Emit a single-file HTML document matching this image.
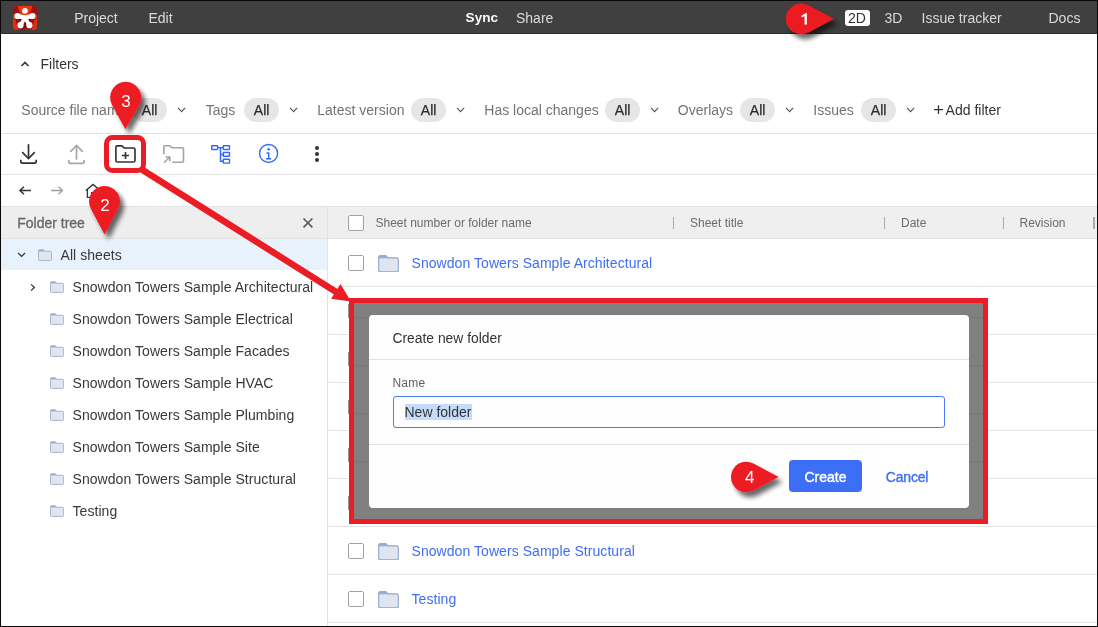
<!DOCTYPE html>
<html><head><meta charset="utf-8">
<style>
*{box-sizing:border-box;margin:0;padding:0}
html,body{width:1098px;height:627px;overflow:hidden;background:#fff;font-family:"Liberation Sans",sans-serif;color:#333}
.a{position:absolute;white-space:nowrap;will-change:opacity;opacity:0.999}
.chipt{will-change:opacity;opacity:0.999}
.f14{font-size:14px;line-height:14px}
.f12{font-size:12px;line-height:12px}
.top{color:#dcdcdc}
.lbl{color:#737373}
.chip{position:absolute;top:98px;width:35px;height:24px;border-radius:12px;background:#e6e6e6}
.chipt{position:absolute;top:103px;font-size:14px;line-height:14px;color:#2b2b2b;font-weight:normal;-webkit-text-stroke:0.25px #2b2b2b}
.hl{position:absolute;height:1px;background:#e3e3e3}
.cb{position:absolute;width:16px;height:16px;border:1.4px solid #a2a2a2;border-radius:2px;background:#fff}
.tr{color:#383838;letter-spacing:0.06px}
.lnk{color:#3f6ff2;letter-spacing:0.06px}
</style></head><body><div style="position:absolute;left:0;top:0;width:1098px;height:627px;opacity:0.999;will-change:opacity">

<!-- top bar -->
<div class="a" style="left:0;top:0;width:1098px;height:34px;background:#404040"></div>
<div class="a" style="left:0;top:33px;width:1098px;height:1px;background:#2a2a2a"></div>
<svg class="a" style="left:13px;top:6px" width="24" height="24" viewBox="0 0 24 24">
  <defs><clipPath id="lc"><rect x="0" y="0" width="24" height="24" rx="3.5"/></clipPath></defs>
  <g clip-path="url(#lc)">
    <rect width="24" height="24" fill="#ea2a0c"/>
    <polygon points="0,0 4.8,0 12,21 19.2,0 24,0 24,7 18.4,24 5.6,24 0,7" fill="#9c1210"/>
    <polygon points="4.8,0 19.2,0 12,21" fill="#f0340a"/>
    <polygon points="6,12 12,14 18,12 16,22 8,22" fill="#7e0b0a"/>
    <g fill="#fff" stroke="#fff" stroke-linecap="round">
      <circle cx="11.9" cy="4.8" r="2.9" stroke="none"/>
      <circle cx="4.4" cy="10" r="3.1" stroke="none"/>
      <circle cx="19.5" cy="10" r="3.1" stroke="none"/>
      <circle cx="7.5" cy="19.2" r="3.1" stroke="none"/>
      <circle cx="16.4" cy="19.2" r="3.1" stroke="none"/>
      <path d="M12 11.6 L4.4 10 M12 11.6 L19.5 10" stroke-width="4.4"/>
      <path d="M12 11.6 L7.5 19.2 M12 11.6 L16.4 19.2" stroke-width="3.8"/>
    </g>
  </g>
</svg>
<div class="a f14 top" style="left:74.2px;top:11px">Project</div>
<div class="a f14 top" style="left:148.5px;top:11px">Edit</div>
<div class="a" style="left:465.6px;top:11.2px;font-size:13.6px;line-height:14px;color:#fff;font-weight:bold">Sync</div>
<div class="a f14 top" style="left:516px;top:11px">Share</div>
<div class="a" style="left:845px;top:10px;width:25px;height:16px;border-radius:3px;background:#fff"></div>
<div class="a f14" style="left:848px;top:11px;color:#333">2D</div>
<div class="a f14 top" style="left:884.5px;top:11px">3D</div>
<div class="a f14 top" style="left:921.5px;top:11px">Issue tracker</div>
<div class="a f14 top" style="left:1048.5px;top:11px">Docs</div>

<!-- filters -->
<svg class="a" style="left:20px;top:60px" width="10" height="8" viewBox="0 0 10 8"><path d="M1.5 6 L5 2.5 L8.5 6" fill="none" stroke="#333" stroke-width="1.6"/></svg>
<div class="a f14" style="left:40.5px;top:57px;color:#333">Filters</div>

<div class="a f14 lbl" style="left:21.3px;top:103px">Source file name</div>
<div class="a f14 lbl" style="left:205.8px;top:103px">Tags</div>
<div class="a f14 lbl" style="left:317.3px;top:103px">Latest version</div>
<div class="a f14 lbl" style="left:484.3px;top:103px">Has local changes</div>
<div class="a f14 lbl" style="left:677.8px;top:103px">Overlays</div>
<div class="a f14 lbl" style="left:813.3px;top:103px">Issues</div>
<svg class="a" style="left:933px;top:104px" width="11" height="11" viewBox="0 0 11 11"><path d="M5.5 1.2 V10 M1 5.6 H10" stroke="#333" stroke-width="1.25" fill="none"/></svg>
<div class="a f14" style="left:945.6px;top:103px;color:#333">Add filter</div>

<div class="chip" style="left:132px"></div><div class="chipt" style="left:141.8px">All</div>
<div class="chip" style="left:244px"></div><div class="chipt" style="left:253.8px">All</div>
<div class="chip" style="left:411px"></div><div class="chipt" style="left:420.8px">All</div>
<div class="chip" style="left:605px"></div><div class="chipt" style="left:614.8px">All</div>
<div class="chip" style="left:740px"></div><div class="chipt" style="left:749.8px">All</div>
<div class="chip" style="left:861px"></div><div class="chipt" style="left:870.8px">All</div>

<svg class="a" style="left:0;top:0;pointer-events:none" width="1098" height="130">
  <g fill="none" stroke="#555" stroke-width="1.1">
    <path d="M178 107.8 L181.6 111.6 L185.2 107.8"/>
    <path d="M290 107.8 L293.6 111.6 L297.2 107.8"/>
    <path d="M457 107.8 L460.6 111.6 L464.2 107.8"/>
    <path d="M651 107.8 L654.6 111.6 L658.2 107.8"/>
    <path d="M786 107.8 L789.6 111.6 L793.2 107.8"/>
    <path d="M907 107.8 L910.6 111.6 L914.2 107.8"/>
  </g>
</svg>

<div class="hl" style="left:0;top:133px;width:1098px"></div>

<!-- toolbar icons -->
<svg class="a" style="left:0;top:135px" width="340" height="38" viewBox="0 135 340 38">
  <!-- download -->
  <g fill="none" stroke="#333" stroke-width="1.7">
    <path d="M28.5 144.2 V158"/>
    <path d="M22.2 152.2 L28.5 158.5 L34.8 152.2"/>
    <path d="M20.8 159.8 V161.8 a1.3 1.3 0 0 0 1.3 1.3 H34.9 a1.3 1.3 0 0 0 1.3 -1.3 V159.8"/>
  </g>
  <!-- upload -->
  <g fill="none" stroke="#a6a6a6" stroke-width="1.7">
    <path d="M76.5 145.8 V159.6"/>
    <path d="M70.2 151.8 L76.5 145.5 L82.8 151.8"/>
    <path d="M68.8 160 V162 a1.3 1.3 0 0 0 1.3 1.3 H82.9 a1.3 1.3 0 0 0 1.3 -1.3 V160"/>
  </g>
  <!-- create folder -->
  <g fill="none" stroke="#333" stroke-width="1.65">
    <path d="M115.9 147.2 a1.4 1.4 0 0 1 1.4 -1.4 h4.6 l2.2 2.2 h9.3 a1.6 1.6 0 0 1 1.6 1.6 v10.8 a1.6 1.6 0 0 1 -1.6 1.6 h-15.9 a1.6 1.6 0 0 1 -1.6 -1.6 z"/>
    <path d="M125.5 152 v7 M122 155.5 h7"/>
  </g>
  <!-- move folder -->
  <g fill="none" stroke="#a3a3a3" stroke-width="1.6">
    <path d="M163.8 154.2 v-7.2 a1.2 1.2 0 0 1 1.2 -1.2 h4.8 l2 2 h10.2 a1.5 1.5 0 0 1 1.5 1.5 v11.5 a1.5 1.5 0 0 1 -1.5 1.5 h-9.6"/>
    <path d="M164 162.8 l5.8 -5.8 M165.5 157 h4.3 v4.3"/>
  </g>
  <!-- tree -->
  <g fill="none" stroke="#356cf6" stroke-width="1.45">
    <rect x="211.7" y="145.7" width="6" height="3.8" rx="0.4"/>
    <rect x="223.3" y="145.7" width="6.2" height="3.8" rx="0.4"/>
    <rect x="223.3" y="152.5" width="6.2" height="3.8" rx="0.4"/>
    <rect x="223.3" y="159.3" width="6.2" height="3.8" rx="0.4"/>
    <path d="M217.7 147.6 h5.6 M220.5 147.6 v13.6 h2.8 M220.5 154.4 h2.8"/>
  </g>
  <!-- info -->
  <g fill="none" stroke="#356cf6" stroke-width="1.45">
    <circle cx="268.6" cy="153.4" r="9"/>
    <path d="M266.5 153 h2.2 v5.8 M265.9 158.8 h5.3"/>
  </g>
  <circle cx="268.6" cy="149.3" r="1.3" fill="#356cf6"/>
  <!-- more -->
  <g fill="#333">
    <circle cx="317" cy="148" r="2"/>
    <circle cx="317" cy="154" r="2"/>
    <circle cx="317" cy="160" r="2"/>
  </g>
</svg>

<div class="hl" style="left:0;top:174px;width:1098px"></div>

<!-- nav -->
<svg class="a" style="left:0;top:178px" width="110" height="24" viewBox="0 178 110 24">
  <g fill="none" stroke="#333" stroke-width="1.5">
    <path d="M31 190.5 H20 M24 186.8 L20 190.5 L24 194.2"/>
  </g>
  <g fill="none" stroke="#9e9e9e" stroke-width="1.3">
    <path d="M51 190.5 H62.5 M58.5 186.8 L62.5 190.5 L58.5 194.2"/>
  </g>
  <g fill="none" stroke="#333" stroke-width="1.3">
    <path d="M85.9 190.6 L93 184.4 L100.1 190.6 M87.4 189.4 V197.3 H98.6 V189.4 M91.6 197.3 V192.6 H94.4 V197.3"/>
  </g>
</svg>

<!-- folder tree panel -->
<div class="a" style="left:0;top:206px;width:328px;height:32px;background:#eeeeee"></div>
<div class="a f14" style="left:17.2px;top:216px;color:#666;-webkit-text-stroke:0.3px #666">Folder tree</div>
<svg class="a" style="left:300px;top:215px" width="16" height="16" viewBox="0 0 16 16"><path d="M3.5 3.5 L12.4 12.4 M12.4 3.5 L3.5 12.4" stroke="#555" stroke-width="1.5" fill="none"/></svg>
<div class="a" style="left:327px;top:206px;width:1px;height:421px;background:#e3e3e3"></div>

<div class="a" style="left:0;top:239px;width:327px;height:31px;background:#e8f2fd"></div>

<svg width="0" height="0" style="position:absolute">
  <defs>
    <symbol id="fold" viewBox="0 0 21 17">
      <path d="M0.7 2.2 a1.6 1.6 0 0 1 1.6 -1.6 h5.5 l2.3 2.3 h8.6 a1.6 1.6 0 0 1 1.6 1.6 v10.6 a1.6 1.6 0 0 1 -1.6 1.6 h-16.4 a1.6 1.6 0 0 1 -1.6 -1.6 z" fill="#dfe6f0" stroke="#8ea5c8" stroke-width="1.1"/>
      <path d="M0.7 4.3 v-2.1 a1.6 1.6 0 0 1 1.6 -1.6 h5.5 l2.6 2.6 h-9.7 z" fill="#98add0"/>
    </symbol>
  </defs>
</svg>

<svg class="a" style="left:16px;top:250px" width="12" height="10" viewBox="0 0 12 10"><path d="M2.2 3 L5.6 6.4 L9 3" fill="none" stroke="#333" stroke-width="1.25"/></svg>
<svg class="a" style="left:38px;top:249px" width="14" height="12"><use href="#fold"/></svg>
<div class="a f14 tr" style="left:60.5px;top:248px">All sheets</div>

<svg class="a" style="left:28px;top:282px" width="10" height="12" viewBox="0 0 10 12"><path d="M3.1 2.4 L6.4 5.5 L3.1 8.6" fill="none" stroke="#333" stroke-width="1.25"/></svg>

<svg class="a" style="left:50px;top:281px" width="14" height="12"><use href="#fold"/></svg>
<svg class="a" style="left:50px;top:313px" width="14" height="12"><use href="#fold"/></svg>
<svg class="a" style="left:50px;top:345px" width="14" height="12"><use href="#fold"/></svg>
<svg class="a" style="left:50px;top:377px" width="14" height="12"><use href="#fold"/></svg>
<svg class="a" style="left:50px;top:409px" width="14" height="12"><use href="#fold"/></svg>
<svg class="a" style="left:50px;top:441px" width="14" height="12"><use href="#fold"/></svg>
<svg class="a" style="left:50px;top:473px" width="14" height="12"><use href="#fold"/></svg>
<svg class="a" style="left:50px;top:505px" width="14" height="12"><use href="#fold"/></svg>

<div class="a f14 tr" style="left:72.5px;top:280px">Snowdon Towers Sample Architectural</div>
<div class="a f14 tr" style="left:72.5px;top:312px">Snowdon Towers Sample Electrical</div>
<div class="a f14 tr" style="left:72.5px;top:344px">Snowdon Towers Sample Facades</div>
<div class="a f14 tr" style="left:72.5px;top:376px">Snowdon Towers Sample HVAC</div>
<div class="a f14 tr" style="left:72.5px;top:408px">Snowdon Towers Sample Plumbing</div>
<div class="a f14 tr" style="left:72.5px;top:440px">Snowdon Towers Sample Site</div>
<div class="a f14 tr" style="left:72.5px;top:472px">Snowdon Towers Sample Structural</div>
<div class="a f14 tr" style="left:72.5px;top:504px">Testing</div>

<!-- table -->
<div class="a" style="left:328px;top:206px;width:770px;height:32px;background:#efefef"></div>
<div class="cb" style="left:348px;top:215px"></div>
<div class="a f12" style="left:375.5px;top:217px;color:#6b6b6b">Sheet number or folder name</div>
<div class="a f12" style="left:690px;top:217px;color:#6b6b6b">Sheet title</div>
<div class="a f12" style="left:901px;top:217px;color:#6b6b6b">Date</div>
<div class="a f12" style="left:1019.5px;top:217px;color:#6b6b6b">Revision</div>
<div class="a" style="left:673px;top:217px;width:1px;height:12px;background:#a8a8a8"></div>
<div class="a" style="left:884px;top:217px;width:1px;height:12px;background:#a8a8a8"></div>
<div class="a" style="left:1003px;top:217px;width:1px;height:12px;background:#a8a8a8"></div>
<div class="a" style="left:1093px;top:217px;width:1.5px;height:12px;background:#a8a8a8"></div>

<div class="hl" style="left:328px;top:286px;width:770px"></div>
<div class="hl" style="left:328px;top:334px;width:770px"></div>
<div class="hl" style="left:328px;top:382px;width:770px"></div>
<div class="hl" style="left:328px;top:430px;width:770px"></div>
<div class="hl" style="left:328px;top:478px;width:770px"></div>
<div class="hl" style="left:328px;top:526px;width:770px"></div>
<div class="hl" style="left:328px;top:574px;width:770px"></div>
<div class="hl" style="left:328px;top:622px;width:770px"></div>

<div class="cb" style="left:348px;top:255px"></div>
<svg class="a" style="left:378px;top:255px" width="21" height="17"><use href="#fold"/></svg>
<div class="a f14 lnk" style="left:411.5px;top:256px">Snowdon Towers Sample Architectural</div>

<div class="cb" style="left:348px;top:543px"></div>
<svg class="a" style="left:378px;top:543px" width="21" height="17"><use href="#fold"/></svg>
<div class="a f14 lnk" style="left:411.5px;top:544px">Snowdon Towers Sample Structural</div>

<div class="cb" style="left:348px;top:591px"></div>
<svg class="a" style="left:378px;top:591px" width="21" height="17"><use href="#fold"/></svg>
<div class="a f14 lnk" style="left:411.5px;top:592px">Testing</div>

<div class="a" style="left:0;top:206px;width:1098px;height:1px;background:#e2e2e2"></div>
<div class="a" style="left:0;top:238px;width:1098px;height:1px;background:#e2e2e2"></div>
<!-- overlay + dialog -->
<div class="a" style="left:348px;top:304px;width:1px;height:14px;background:#8e939c"></div>
<div class="a" style="left:348px;top:352px;width:1px;height:14px;background:#8e939c"></div>
<div class="a" style="left:348px;top:400px;width:1px;height:14px;background:#8e939c"></div>
<div class="a" style="left:348px;top:448px;width:1px;height:14px;background:#8e939c"></div>
<div class="a" style="left:348px;top:496px;width:1px;height:14px;background:#8e939c"></div>
<div class="a" style="left:354px;top:303px;width:629px;height:216px;background:#808080"></div>
<div class="a" style="left:354px;top:317px;width:629px;height:1px;background:#777"></div>
<div class="a" style="left:354px;top:365px;width:629px;height:1px;background:#777"></div>
<div class="a" style="left:354px;top:413px;width:629px;height:1px;background:#777"></div>
<div class="a" style="left:354px;top:461px;width:629px;height:1px;background:#777"></div>
<div class="a" style="left:369px;top:315px;width:600px;height:193px;background:#fff;border-radius:4px"></div>
<div class="a" style="left:392.5px;top:331.3px;font-size:13.85px;line-height:14px;color:#333">Create new folder</div>
<div class="hl" style="left:369px;top:359px;width:600px"></div>
<div class="a f12" style="left:392.5px;top:377px;color:#616161;letter-spacing:0.2px">Name</div>
<div class="a" style="left:393px;top:396px;width:552px;height:32px;border:1px solid #4a7bf4;border-radius:3px"></div>
<div class="a" style="left:405px;top:404px;width:67px;height:16px;background:#c5dbfb"></div>
<div class="a f14" style="left:404.5px;top:405px;color:#333">New folder</div>
<div class="hl" style="left:369px;top:444px;width:600px"></div>
<div class="a" style="left:789px;top:460px;width:73px;height:32px;border-radius:4px;background:#3d6ff6"></div>
<div class="a f14" style="left:804.5px;top:470px;color:#fff;-webkit-text-stroke:0.4px #fff">Create</div>
<div class="a f14" style="left:885.8px;top:470px;color:#3f6ff2;-webkit-text-stroke:0.4px #3f6ff2;letter-spacing:-0.2px">Cancel</div>

<!-- annotations -->
<svg class="a" style="left:0;top:0" width="1098" height="627" viewBox="0 0 1098 627">
  <defs>
    <filter id="sh" x="-50%" y="-50%" width="200%" height="200%">
      <feGaussianBlur in="SourceAlpha" stdDeviation="2.5"/>
      <feOffset dx="4" dy="4.5" result="b"/>
      <feComponentTransfer><feFuncA type="linear" slope="0.6"/></feComponentTransfer>
      <feMerge><feMergeNode/><feMergeNode in="SourceGraphic"/></feMerge>
    </filter>
  </defs>
  <g fill="none" stroke="#ec1c24" stroke-width="5">
    <rect x="106.5" y="137.5" width="37" height="33" rx="6"/>
    <rect x="351.5" y="300.5" width="634" height="221"/>
  </g>
  <path d="M141 169 L337 292.5" stroke="#ec1c24" stroke-width="6.5"/>
  <polygon points="340.5,284.1 331.1,298.7 351,301.5" fill="#ec1c24"/>

  <g filter="url(#sh)" fill="#ec1c24">
    <path d="M834.0 18.8 L808.47 32.47 A15.4 15.4 0 1 1 808.39 5.28 Z"/>
    <path d="M125.4 129.2 L112.03 104.92 A15.6 15.6 0 1 1 139.22 105.18 Z"/>
    <path d="M104.6 234.5 L90.83 208.70 A15.5 15.5 0 1 1 118.22 208.62 Z"/>
    <path d="M778.6 477.0 L753.43 490.49 A15.3 15.3 0 1 1 753.43 463.51 Z"/>
  </g>
  <polygon fill="#fff" points="804.5,24.6 806.9,24.6 806.9,12.9 805.9,12.9 801.5,15.7 801.6,17.4 804.5,15.9"/>
  <g fill="#fff" font-family="Liberation Sans" font-size="17" text-anchor="middle">
    <text x="104.9" y="211">2</text>
    <text x="126" y="107">3</text>
    <text x="749.8" y="482.8">4</text>
  </g>
</svg>

<!-- outer frame -->
<div class="a" style="left:0;top:0;width:1098px;height:627px;border:1px solid #080808"></div>
</div></body></html>
